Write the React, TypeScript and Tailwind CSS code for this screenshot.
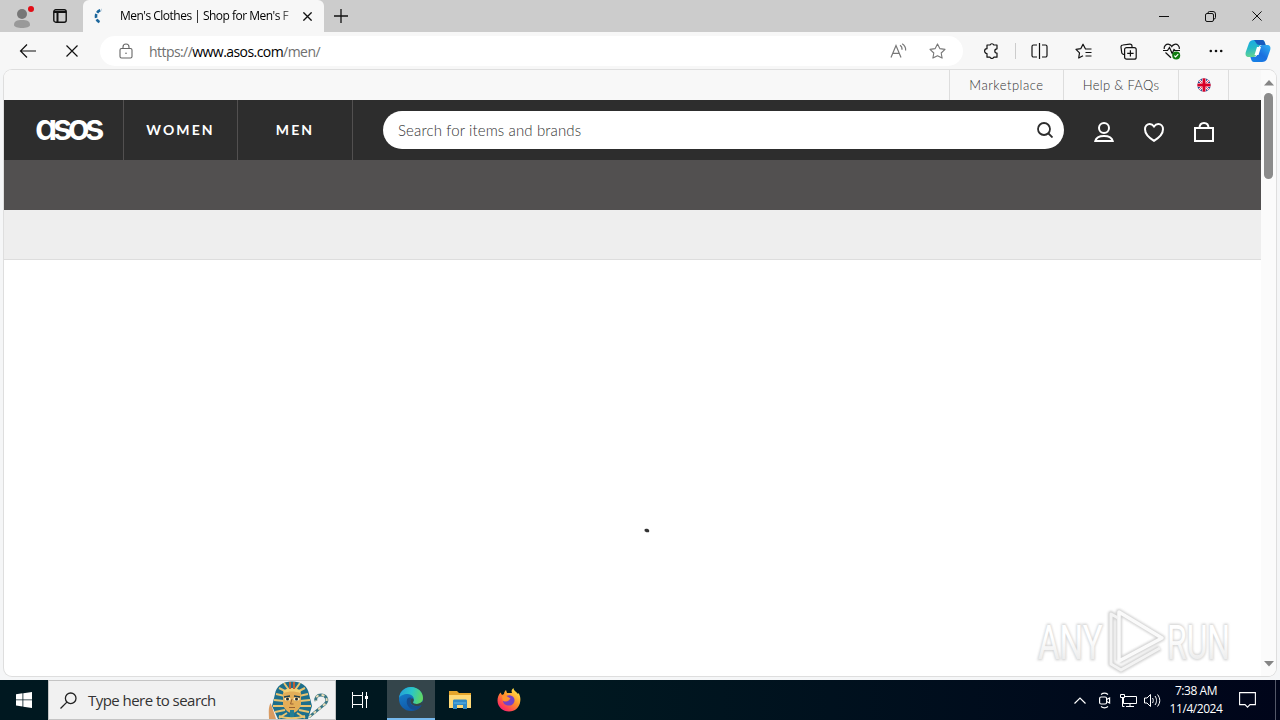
import React from 'react';

interface IconProps {
  className?: string;
}

const BackIcon = () => (
  <svg width="18" height="16" viewBox="0 0 18 16" fill="none" stroke="#111" strokeWidth="1.2">
    <path d="M17 8H2M8 1.5 1.5 8 8 14.5" />
  </svg>
);

const CrossIcon = ({ size = 12, width = 1.2 }: { size?: number; width?: number }) => (
  <svg width={size} height={size} viewBox="0 0 12 12" fill="none" stroke="#111" strokeWidth={width}>
    <path d="m.5.5 11 11m0-11-11 11" />
  </svg>
);

const LockIcon = () => (
  <svg width="14" height="16" viewBox="0 0 14 16" fill="none" stroke="#666" strokeWidth="1.1">
    <rect x="1" y="5.5" width="12" height="9.5" rx="1.5" />
    <path d="M4 5.5V4a3 3 0 0 1 6 0v1.5" />
    <circle cx="7" cy="10.3" r=".8" fill="#666" stroke="none" />
  </svg>
);

const StarIcon = () => (
  <svg width="17" height="16" viewBox="0 0 17 16" fill="none" stroke="#777" strokeWidth="1.1" strokeLinejoin="round">
    <path d="m8.5.9 2.3 4.7 5.2.8-3.8 3.6.9 5.1-4.6-2.4-4.6 2.4.9-5.1L1 6.4l5.2-.8z" />
  </svg>
);

const ReadAloudIcon = () => (
  <svg width="17" height="16" viewBox="0 0 17 16" fill="none" stroke="#777" strokeWidth="1.2">
    <path d="M1 14.5 6 2.5l5 12M2.800 10.300h6.400" />
    <path d="M10 2.200c1.600 1 2.200 2.600 2 4.500M12.200.8c2.500 1.600 3.700 3.800 3.400 6.700" />
  </svg>
);

const PuzzleIcon = () => (
  <svg width="16" height="16" viewBox="0 0 16 16" fill="none" stroke="#111" strokeWidth="1.2" strokeLinejoin="round">
    <path d="M4 2h3a2 1.800 0 0 1 3.800 0H14v3.800a2.200 2.200 0 0 0 0 4.400V14.200h-3.200a2 1.800 0 0 1-3.800 0H4v-3.700a2.400 2.400 0 1 1 0-4.800z" />
  </svg>
);

const SplitIcon = () => (
  <svg width="17" height="16" viewBox="0 0 17 16" fill="none" stroke="#111" strokeWidth="1.2">
    <path d="M6 2H2.500A1.500 1.500 0 0 0 1 3.500v9A1.500 1.500 0 0 0 2.500 14H6M11 2h3.500A1.500 1.500 0 0 1 16 3.500v9a1.500 1.500 0 0 1-1.500 1.500H11M8.500 0v16" />
  </svg>
);

const FavoritesIcon = () => (
  <svg width="17" height="16" viewBox="0 0 17 16" fill="none" stroke="#111" strokeWidth="1.2" strokeLinejoin="round">
    <path d="M16.500 6h-6L8 1.200 5.900 5.600 1 6.400 4.500 9.900 3.700 15 8 12.700" />
    <path d="M10.500 9.500h6M10.500 13h6" />
  </svg>
);

const CollectionsIcon = () => (
  <svg width="17" height="17" viewBox="0 0 17 17" fill="none" stroke="#111" strokeWidth="1.2">
    <path d="M12 4V3a2 2 0 0 0-2.300-1.900L2.800 2A2 2 0 0 0 1 4.200l.7 5.300A2 2 0 0 0 4 11.300" />
    <rect x="4.600" y="4.600" width="11.600" height="11.600" rx="2" />
    <path d="M10.400 7.200v6.400M7.200 10.400h6.400" />
  </svg>
);

const EssentialsIcon = () => (
  <svg width="18" height="17" viewBox="0 0 18 17" fill="none" stroke="#111" strokeWidth="1.200">
    <path d="M1.200 6C.6 2.700 3.500.8 5.900 1.300 7.400 1.600 8.300 2.600 8.800 3.500c.5-.9 1.400-1.900 2.900-2.200 2.600-.5 5.200 1.700 4.600 4.700M2.500 9.500 8 14.800" />
    <path d="M0 7.500h4.500L6.500 4.500l2.700 6 1.800-4 1 1h5" />
    <circle cx="13.200" cy="12.500" r="4" fill="#107c10" stroke="none" />
    <path d="m11.300 12.600 1.300 1.300 2.600-2.700" stroke="#fff" />
  </svg>
);

const CopilotIcon = () => (
  <svg width="26" height="24" viewBox="0 0 26 24">
    <defs>
      <linearGradient id="copA" x1="0" y1="0" x2=".2" y2="1">
        <stop offset="0" stopColor="#18a8e8" />
        <stop offset=".5" stopColor="#25b8c8" />
        <stop offset="1" stopColor="#62d492" />
      </linearGradient>
      <linearGradient id="copB" x1="1" y1="0" x2="0" y2="1">
        <stop offset="0" stopColor="#30b4f4" />
        <stop offset=".5" stopColor="#1b70df" />
        <stop offset="1" stopColor="#1484e8" />
      </linearGradient>
    </defs>
    <path d="M9 1h8c2 0 2.500 1.500 3 3l.6 2H17c-2 0-3 1-3.600 3L11 16c-.6 1.500-1.400 2-3 2H4c-3 0-4-2-3.200-5L4 4c.8-2 2.500-3 5-3z" fill="url(#copA)" />
    <path d="M9 1h8c2 0 2.500 1.500 3 3l.6 2h-6C11 6 11 2.500 9 1z" fill="#175bbd" />
    <path d="M17 23H9c-2 0-2.500-1.500-3-3l-.6-2H9c2 0 3-1 3.600-3L15 8c.6-1.500 1.400-2 3-2h4c3 0 4 2 3.200 5L22 20c-.8 2-2.500 3-5 3z" fill="url(#copB)" />
    <path d="M12 8h4l-2.500 8h-4z" fill="#fff" />
  </svg>
);

const FlagIcon = () => (
  <svg width="14" height="14" viewBox="0 0 14 14">
    <clipPath id="flag">
      <circle cx="7" cy="7" r="6.700" />
    </clipPath>
    <g clipPath="url(#flag)">
      <path fill="#21468b" d="M0 0h14v14H0z" />
      <path d="m0 0 14 14M14 0 0 14" stroke="#fff" strokeWidth="2.200" />
      <path d="m0 0 14 14M14 0 0 14" stroke="#d80027" strokeWidth=".7" />
      <path d="M7 0v14M0 7h14" stroke="#fff" strokeWidth="4.200" />
      <path d="M7 0v14M0 7h14" stroke="#d80027" strokeWidth="3" />
    </g>
  </svg>
);

const AccountIcon = () => (
  <svg width="20" height="20" viewBox="0 0 20 20" fill="none" stroke="#fff" strokeWidth="2">
    <circle cx="10" cy="6" r="5" />
    <path d="M1.300 19c.7-3 4.300-5 8.700-5s8 2 8.700 5z" />
  </svg>
);

const HeartIcon = () => (
  <svg width="20" height="19" viewBox="0 0 20 19" fill="none" stroke="#fff" strokeWidth="2">
    <path d="M10 3.500C8.700 1.600 7.300 1 5.700 1 3.200 1 1 3.100 1 6.200 1 10.300 4.500 14.400 10 17.800c5.500-3.400 9-7.500 9-11.600C19 3.100 16.800 1 14.300 1 12.700 1 11.300 1.600 10 3.500z" />
  </svg>
);

const BagIcon = () => (
  <svg width="20" height="20" viewBox="0 0 20 20" fill="none" stroke="#fff" strokeWidth="2">
    <path d="M1 6h18v13H1zM5.500 6C5.500 3 7.300 1 10 1s4.500 2 4.500 5" />
  </svg>
);

const Pharaoh = ({ className }: IconProps) => (
  <svg className={className} width="64" height="38" viewBox="0 0 64 38">
    <path d="M3 38c0-7-1-10 1.500-16C7 28 8 32 10 38z" fill="#d99b62" />
    <path d="M9 13C10 5 17 .5 26 .5S42 5 43 13l3 12-4 13H12L6 25z" fill="#1d6f8c" />
    <path d="m10 13 9 2M8 19l10 1M7 25l11 0M9 31l10-2M13 37l8-5M42 13l-9 2M44 19l-10 1M45 25H34M43 31l-10-2M39 37l-8-5M13 7l8 4M39 7l-8 4M18 2l5 7M34 2l-5 7" stroke="#e9c470" strokeWidth="2" />
    <path d="M17 12c2-4 16-4 18 0v11c0 4-5 9-9 9s-9-5-9-9z" fill="#e3ae58" />
    <path d="M17 10c5-4 13-4 18 0l-1 2c-5-2-11-2-16 0z" fill="#f3d075" />
    <path d="M23 1h2v7h-2zM27 1h2v7h-2z" fill="#bd6038" />
    <path d="m18 16 6-1M28 15l6 1" stroke="#214250" strokeWidth="1.300" />
    <ellipse cx="21.500" cy="18" rx="3" ry="1.500" fill="#fff5d5" />
    <ellipse cx="30.500" cy="18" rx="3" ry="1.500" fill="#fff5d5" />
    <circle cx="21.500" cy="18" r="1.500" fill="#202c33" />
    <circle cx="30.500" cy="18" r="1.500" fill="#202c33" />
    <path d="m26 18-1.500 5h3M23 26.500h6" stroke="#9a6130" fill="none" />
    <path d="M24 29h4v9h-4z" fill="#247e94" />
    <path d="M13 35c7 3 18 3 26 0" stroke="#e9c470" strokeWidth="2" fill="none" />
    <path d="M43 36 59 23c4-4 1-9-4-9-4 0-6 3-5 6" fill="none" stroke="#397684" strokeWidth="2.800" />
    <path d="M43 36 59 23c4-4 1-9-4-9-4 0-6 3-5 6" fill="none" stroke="#efe0b8" strokeWidth="1.800" strokeDasharray="3 3" />
  </svg>
);

const EdgeIcon = () => (
  <svg width="26" height="26" viewBox="0 0 26 26">
    <defs>
      <linearGradient id="edgeTop" x1="0" y1=".3" x2="1" y2=".5">
        <stop offset="0" stopColor="#249ed9" />
        <stop offset=".5" stopColor="#29c5c9" />
        <stop offset="1" stopColor="#62d860" />
      </linearGradient>
      <linearGradient id="edgeLow" x1="0" y1="0" x2=".4" y2="1">
        <stop offset="0" stopColor="#1687d5" />
        <stop offset="1" stopColor="#1158a6" />
      </linearGradient>
    </defs>
    <circle cx="13" cy="13" r="12" fill="url(#edgeLow)" />
    <path d="M1 12C2 5 7 1 13 1c7 0 12 5 12 11 0 4-3 6-6.500 6-2.500 0-4-1-3.300-2.300C17.500 12 14 8 9.500 8 5.500 8 2 10 1 12z" fill="url(#edgeTop)" />
    <path d="M9 13.500C7.500 19 12 24 18 24c3-1 5-3.500 6-5-6 3-12 1-11.700-4 0-1 .6-2 1.700-3-2-1-4.300-.5-5 1.500z" fill="#164c8e" />
    <path d="M24 19c-5.500 2.600-11.500.5-11.700-4 .2-1.700 1.500-2.500 2.200-2.800 1.400 1 1.700 2.300.7 3.500-.7 1.300.8 2.300 3.300 2.300 2.200 0 4.500-1 5.700-2.500.7 1 .5 2.500-.2 3.500z" fill="#34454b" />
  </svg>
);

const FolderIcon = () => (
  <svg width="22" height="20" viewBox="0 0 22 20">
    <path d="M0 1h8l2 2h12v15H0z" fill="#e5a52c" />
    <path d="M0 5h22v13H0z" fill="#ffd977" />
    <path d="M4 19v-8c0-1 .5-1.500 1.500-1.500h11c1 0 1.500.5 1.500 1.500v8h-4v-4H8v4z" fill="#318ac5" />
    <path d="M5 13h12" stroke="#62b7e8" />
  </svg>
);

const FirefoxIcon = () => (
  <svg width="24" height="24" viewBox="0 0 24 24">
    <defs>
      <linearGradient id="fox" x1=".85" y1="0" x2=".1" y2="1">
        <stop offset="0" stopColor="#fff04d" />
        <stop offset=".45" stopColor="#ff9129" />
        <stop offset=".8" stopColor="#ff3a58" />
        <stop offset="1" stopColor="#e7148b" />
      </linearGradient>
    </defs>
    <path d="M3.500 4.500 5 7l2-1c0-2 1-3 2-4l1 3h5c-1-2 0-4 1.500-5 0 3 3 3.500 4.500 6l.7-1c1.500 3 2 5.500 1.500 8.500C22.500 19.500 18 23.500 12 23.500S.5 19 .5 12.500c0-3 1-6 3-8z" fill="url(#fox)" />
    <path d="M8 9.500c2-3 7-3 9 .5 1.500 3-.5 7.500-5 7.500-3.500 0-6-2-6-5 1 1 3 1.500 5 .5l2-1.500-4-1z" fill="#7542c7" />
    <path d="M5 7.500 9.500 8l4 2.500-3 2c-2 1.200-4 .8-5-.5z" fill="#ff942d" />
  </svg>
);

const Watermark = () => (
  <svg className="overflow-visible" width="200" height="70" viewBox="0 0 200 70">
    <defs>
      <filter id="soft" x="-10%" y="-10%" width="120%" height="120%">
        <feGaussianBlur stdDeviation="1.200" />
      </filter>
      <linearGradient id="mark" x1="0" y1="0" x2="0" y2="1">
        <stop offset=".4" stopColor="#ffffff" />
        <stop offset="1" stopColor="#e3e3e3" />
      </linearGradient>
    </defs>
    <g fontFamily="Roboto, sans-serif" fontSize="48" fontWeight="400">
      <g filter="url(#soft)" fill="#d4d4d4" stroke="#d4d4d4" strokeWidth="2.400">
        <text transform="translate(3 53) scale(.69 1)">ANY</text>
        <text transform="translate(132 53) scale(.665 1)">RUN</text>
      </g>
      <g fill="url(#mark)">
        <text transform="translate(3 53) scale(.69 1)">ANY</text>
        <text transform="translate(132 53) scale(.665 1)">RUN</text>
      </g>
    </g>
    <g fill="none" strokeLinejoin="round">
      <path d="M84 55V6l43 26-43 23M83 12l-7-4v50l10 6 39-22" stroke="#d0d0d0" strokeWidth="6" filter="url(#soft)" />
      <path d="M84 55V6l43 26-43 23z" stroke="#fafafa" strokeWidth="3.500" />
      <path d="M83 12l-7-4v50l10 6 39-22" stroke="#f3f3f3" strokeWidth="3" />
    </g>
  </svg>
);

const TabStrip = () => (
  <div className="flex h-8 bg-[#cccccc]">
    <div className="flex w-[83px] items-center">
      <svg className="ml-3 mt-1" width="24" height="26" viewBox="0 0 24 26">
        <circle cx="10" cy="9" r="5" fill="#777" />
        <path d="M2 20c0-4 3-5 8-5s8 1 8 5c0 2-4 3-8 3s-8-1-8-3z" fill="#999" />
        <circle cx="19" cy="4" r="3" fill="#e20d16" />
      </svg>
      <svg className="ml-[17px]" width="14" height="14" viewBox="0 0 14 14" fill="none" stroke="#111" strokeWidth="1.400">
        <rect x=".8" y=".8" width="12.400" height="12.400" rx="2" />
        <path d="M.8 3h12.400M4.500 3v10" strokeWidth="2" />
      </svg>
    </div>
    <div className="flex w-[241px] items-center rounded-t-md bg-[#f7f7f7]">
      <svg className="ml-[11px]" width="14" height="16" viewBox="0 0 14 16" fill="none" stroke="#1b669c" strokeWidth="2.600">
        <path d="M5.500 14.200A6.500 6.500 0 0 1 2 8c0-3 2.500-5.800 6-6" strokeDasharray="4 1.500" />
      </svg>
      <div className="ml-3 w-[176px] whitespace-nowrap bg-gradient-to-r from-black from-88% to-[#ddd] bg-clip-text font-['Open_Sans',sans-serif] text-[12px] tracking-[-0.51px] text-transparent">
        Men's Clothes | Shop for Men's F
      </div>
      <div className="ml-[7px]">
        <CrossIcon size={9} width={1.8} />
      </div>
    </div>
    <div className="flex flex-1 items-center">
      <svg className="ml-[10px]" width="14" height="14" viewBox="0 0 14 14" stroke="#111" strokeWidth="1.300">
        <path d="M7 0v14M0 7h14" />
      </svg>
      <div className="ml-auto flex items-center">
        <svg width="10" height="10" viewBox="0 0 10 10" stroke="#111">
          <path d="M0 5.500h10" />
        </svg>
        <svg className="ml-9" width="11" height="11" viewBox="0 0 11 11" fill="none" stroke="#111">
          <rect x=".5" y="2.500" width="8" height="8" rx="1.500" />
          <path d="M3 2.500V2A1.500 1.500 0 0 1 4.500.500H8A2.500 2.500 0 0 1 10.500 3v3.500A1.500 1.500 0 0 1 9 8" />
        </svg>
        <div className="ml-9 mr-[18px]">
          <CrossIcon size={10} width={1.2} />
        </div>
      </div>
    </div>
  </div>
);

const Toolbar = () => (
  <div className="flex h-[38px] items-center bg-[#f7f7f7] font-['Open_Sans',sans-serif]">
    <div className="ml-[19px]">
      <BackIcon />
    </div>
    <div className="ml-[29px]">
      <CrossIcon />
    </div>
    <div className="ml-[22px] flex h-[30px] w-[863px] items-center rounded-full bg-white">
      <div className="ml-[19px]">
        <LockIcon />
      </div>
      <div className="ml-4 whitespace-nowrap text-[14px] tracking-[-0.56px] text-[#707070]">
        https://<span className="text-black">www.asos.com</span>/men/
      </div>
      <div className="ml-auto mr-[17px] flex gap-[22px]">
        <ReadAloudIcon />
        <StarIcon />
      </div>
    </div>
    <div className="ml-1.5 flex w-[44px] justify-center">
      <PuzzleIcon />
    </div>
    <div className="mx-[1.5px] h-4 w-px bg-[#ccc]" />
    <div className="flex w-[44px] justify-center">
      <SplitIcon />
    </div>
    <div className="flex w-[45px] justify-center">
      <FavoritesIcon />
    </div>
    <div className="flex w-[44px] justify-center">
      <CollectionsIcon />
    </div>
    <div className="flex w-[44px] justify-center">
      <EssentialsIcon />
    </div>
    <div className="flex w-[44px] justify-center">
      <svg width="14" height="4" viewBox="0 0 14 4" fill="#111">
        <circle cx="1.800" cy="2" r="1.300" />
        <circle cx="7" cy="2" r="1.300" />
        <circle cx="12.200" cy="2" r="1.300" />
      </svg>
    </div>
    <div className="flex w-10 justify-center">
      <CopilotIcon />
    </div>
  </div>
);

const SiteHeader = () => (
  <header className="font-[Lato,sans-serif]">
    <div className="flex h-[30px] items-center justify-end bg-[#f8f8f8] pr-8 text-[13px] font-light text-[#333]">
      <div className="flex h-full w-[114px] items-center justify-center border-l border-[#ddd] pt-0.5 tracking-[0.52px]">Marketplace</div>
      <div className="flex h-full w-[115px] items-center justify-center border-l border-[#ddd] pt-0.5 tracking-[0.3px]">Help &amp; FAQs</div>
      <div className="flex h-full w-[51px] items-center justify-center border-x border-[#ddd]">
        <FlagIcon />
      </div>
    </div>
    <div className="flex h-[60px] items-center bg-[#2d2d2d] text-white">
      <div className="flex h-full w-[119px] items-center pl-[31px]">
        <span className="mt-[-7px] font-[Inter,sans-serif] text-[36px] leading-none font-semibold tracking-[-4.8px] [font-feature-settings:'cv11']">asos</span>
      </div>
      <div className="flex h-full w-[114px] items-center justify-center border-l border-[#525050] pb-0.5 text-[14px] font-bold tracking-[2.1px]">WOMEN</div>
      <div className="flex h-full w-[116px] items-center justify-center border-x border-[#525050] pb-0.5 text-[14px] font-bold tracking-[2.1px]">MEN</div>
      <div className="ml-[30px] flex h-[38px] w-[681px] items-center rounded-full bg-white pr-[11px] pl-[15px]">
        <span className="text-[15px] font-light tracking-[0.13px] text-[#333]">Search for items and brands</span>
        <svg className="ml-auto" width="16" height="16" viewBox="0 0 16 16" fill="none" stroke="#2d2d2d" strokeWidth="1.800">
          <circle cx="7" cy="7" r="6" />
          <path d="m11.500 11.500 4 4" />
        </svg>
      </div>
      <div className="mt-1 ml-[30px] flex items-center gap-[30px]">
        <AccountIcon />
        <HeartIcon />
        <BagIcon />
      </div>
    </div>
    <div className="h-[50px] bg-[#525050]" />
    <div className="h-[50px] border-b border-[#ddd] bg-[#eeeeee]" />
  </header>
);

const Scrollbar = () => (
  <div className="flex w-[15px] flex-col items-center bg-[#fbfbfb]">
    <svg className="mt-2.5" width="10" height="6" viewBox="0 0 10 6">
      <path d="m5 0 5 5.500H0z" fill="#858585" />
    </svg>
    <div className="mt-[7px] h-[86px] w-[9px] rounded-full bg-[#8b8b8b]" />
    <svg className="mt-auto mb-[9px]" width="10" height="6" viewBox="0 0 10 6">
      <path d="m5 5.500 5-5.500H0z" fill="#858585" />
    </svg>
  </div>
);

const Taskbar = () => (
  <div className="flex h-10 bg-gradient-to-r from-[#001820] via-[#001820] via-45% to-[#00051a] font-['Open_Sans',sans-serif]">
    <div className="flex w-12 items-center justify-center">
      <svg width="16" height="16" viewBox="0 0 16 16" fill="#fff">
        <path d="M0 2.200 6.500 1.300v6.200H0zM7.300 1.200 16 0v7.500H7.300zM0 8.300h6.500v6.200L0 13.600zM7.300 8.300H16V16l-8.700-1.300z" />
      </svg>
    </div>
    <div className="flex w-72 items-center border border-[#c4c4c4] bg-[#f1f1f1]">
      <svg className="ml-[11px]" width="17" height="17" viewBox="0 0 17 17" fill="none" stroke="#222" strokeWidth="1.300">
        <circle cx="10.700" cy="6.300" r="5.300" />
        <path d="m6.900 10.100-6.400 6.400" />
      </svg>
      <span className="ml-[11px] text-[15px] tracking-[-0.54px] whitespace-nowrap text-[#333]">Type here to search</span>
      <Pharaoh className="mr-[5px] ml-auto" />
    </div>
    <div className="flex w-[51px] items-center justify-center pr-0.5">
      <svg width="17" height="16" viewBox="0 0 17 16" fill="none" stroke="#fff">
        <path d="M.5 0v3.500h10V0M.5 16v-3.500h10V16M.5 3.500v9M10.500 3.500v9M14.500 0v16" />
        <path d="M13 4h3v3h-3z" fill="#fff" stroke="none" />
      </svg>
    </div>
    <div className="flex w-12 items-center justify-center border-b-2 border-[#76b9ed] bg-[#34454b]">
      <EdgeIcon />
    </div>
    <div className="flex w-[49px] items-center justify-center">
      <FolderIcon />
    </div>
    <div className="flex w-[49px] items-center justify-center">
      <FirefoxIcon />
    </div>
    <div className="ml-auto flex items-center">
      <svg width="12" height="7" viewBox="0 0 12 7" fill="none" stroke="#fff" strokeWidth="1.200">
        <path d="m.5 6.500 5.500-5.500 5.500 5.500" />
      </svg>
      <svg className="ml-[13px]" width="12" height="17" viewBox="0 0 12 17" fill="none" stroke="#fff" strokeWidth="1.200">
        <rect x=".6" y="5" width="7" height="7" rx="1.500" />
        <path d="m7.600 7.500 3-1.500v5l-3-1.500M2 2.500c2-1.500 5-1.500 7 0M2 14.500c2 1.500 5 1.500 7 0" />
      </svg>
      <svg className="ml-[9px]" width="17" height="15" viewBox="0 0 17 15" fill="none" stroke="#fff">
        <path d="M5 3.500h11.500v7H3.500V5M10 10.500v3M6 13.500h8" />
        <path d="M.5 1.500h4v3h-4zM2.500 4.500v9M2.500 13.500h2" />
      </svg>
      <svg className="ml-[7px]" width="17" height="15" viewBox="0 0 17 15" fill="none" stroke="#fff">
        <path d="M.5 5h2.500L6.500 1.500v12L3 10H.5zM8.500 5c1 1.500 1 3.500 0 5M11 3c2 2.800 2 6.200 0 9M13.500 1.500c3 4 3 8 0 12" />
      </svg>
      <div className="ml-2 w-[54px] text-center text-[12px] leading-[18px] tracking-[-0.45px] whitespace-nowrap text-white">
        <div>7:38 AM</div>
        <div className="-mx-2">11/4/2024</div>
      </div>
      <svg className="mr-[19px] ml-4" width="17" height="16" viewBox="0 0 17 16" fill="none" stroke="#fff" strokeWidth="1.100">
        <path d="M.6.600h15.800v12H11l-2.500 2.500L6 12.600H.6z" />
      </svg>
      <div className="mr-1 h-10 w-px bg-[#535868]" />
    </div>
  </div>
);

export default function App() {
  return (
    <div className="flex h-[720px] w-[1280px] flex-col overflow-hidden bg-[#f5f6f7]">
      <TabStrip />
      <Toolbar />
      <div className="mb-1 flex-1 px-1">
        <div className="flex h-full overflow-hidden rounded-lg bg-white shadow-[0_0_0_1px_#dedede]">
          <main className="relative w-[1257px]">
            <SiteHeader />
            {/* loading spinner speck */}
            <svg className="mt-[267px] ml-[640px]" width="6" height="6" viewBox="0 0 6 6">
              <ellipse cx="3" cy="3.500" rx="2.500" ry="1.700" fill="#333" transform="rotate(15 3 3)" />
            </svg>
            <div className="absolute right-[26px] bottom-0">
              <Watermark />
            </div>
          </main>
          <Scrollbar />
        </div>
      </div>
      <Taskbar />
    </div>
  );
}
